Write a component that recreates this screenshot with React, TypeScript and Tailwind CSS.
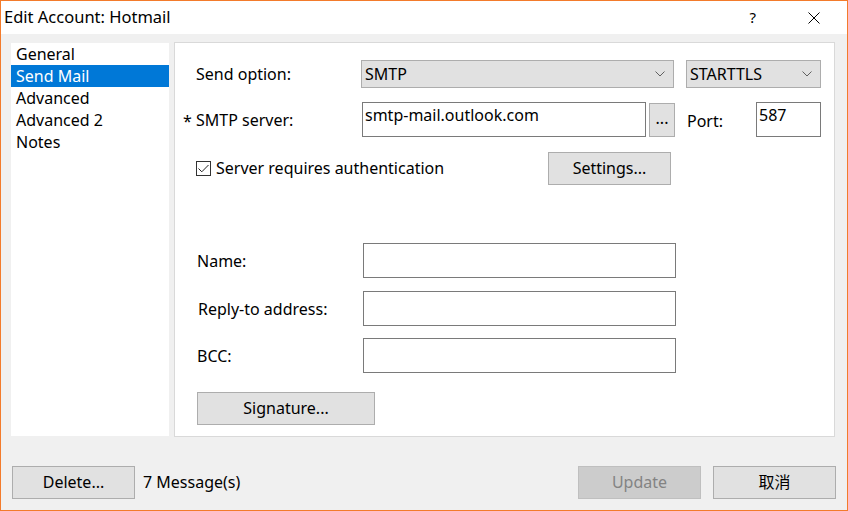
import React from 'react';

const font = { fontFamily: '"Noto Sans", "Noto Sans CJK SC", sans-serif' };

const Chevron = () => (
  <svg width="10" height="6" viewBox="0 0 10 6" className="text-[#606060]">
    <path d="M0.5 0.5 L5 5 L9.5 0.5" fill="none" stroke="currentColor" strokeWidth="1" />
  </svg>
);

const Select = ({ value, className }: { value: string; className: string }) => (
  <div
    className={`flex h-[28px] items-center justify-between border border-[#adadad] bg-[#e1e1e1] pl-[3px] pr-[8px] ${className}`}
  >
    <span className="-mt-[1px]">{value}</span>
    <Chevron />
  </div>
);

const Button = ({ label, className, disabled }: { label: string; className: string; disabled?: boolean }) => (
  <button
    className={`flex h-[33px] items-center justify-center border pb-[1px] ${
      disabled ? 'border-[#bfbfbf] bg-[#cccccc] text-[#838383]' : 'border-[#adadad] bg-[#e1e1e1] text-black'
    } ${className}`}
  >
    {label}
  </button>
);

const Field = ({ value, className }: { value?: string; className: string }) => (
  <div className={`h-[35px] border border-[#7a7a7a] bg-white pl-[2px] pt-[1px] leading-[22px] ${className}`}>
    {value}
  </div>
);

const navItems = ['General', 'Send Mail', 'Advanced', 'Advanced 2', 'Notes'];

export default function App() {
  return (
    <div
      className="flex h-[511px] w-[848px] flex-col border border-[#f37b2b] text-[16px] text-black"
      style={font}
    >
      {/* title bar */}
      <div className="flex h-[33px] shrink-0 items-center bg-white pl-[3px]">
        <span className="-mt-[1px] text-[16.5px]">Edit Account: Hotmail</span>
        <span className="ml-auto mr-[52px] text-[15px]">?</span>
        <svg width="12" height="12" viewBox="0 0 12 12" className="mr-[27px]">
          <path d="M0.5 0.5 L11.5 11.5 M11.5 0.5 L0.5 11.5" stroke="#000" strokeWidth="1" />
        </svg>
      </div>

      <div className="flex flex-1 flex-col bg-[#f0f0f0]">
        <div className="flex items-start pl-[10px] pt-[8px]">
          {/* side list */}
          <div className="mt-[1px] h-[393px] w-[158px] bg-white leading-[22px]">
            {navItems.map((item) => (
              <div
                key={item}
                className={`h-[22px] pl-[5px] ${item === 'Send Mail' ? 'bg-[#0078d7] text-white' : ''}`}
              >
                {item}
              </div>
            ))}
          </div>

          {/* main panel */}
          <div className="ml-[5px] flex h-[395px] w-[661px] flex-col border border-[#d9d9d9] bg-white pl-[8px]">
            <div className="mt-[17px] flex items-center">
              <span className="w-[13px]" />
              <span className="-mt-[1px] w-[165px]">Send option:</span>
              <Select value="SMTP" className="w-[313px]" />
              <Select value="STARTTLS" className="ml-[12px] w-[135px]" />
            </div>

            <div className="mt-[14px] flex items-center">
              <span className="w-[13px] pt-[2px]">*</span>
              <span className="w-[166px] pt-[1px]">SMTP server:</span>
              <Field value="smtp-mail.outlook.com" className="w-[284px]" />
              <Button label="..." className="ml-[3px] h-[34px] w-[26px] pb-[3px]" />
              <span className="ml-[12px] w-[69px] pt-[2px]">Port:</span>
              <Field value="587" className="w-[65px]" />
            </div>

            <div className="mt-[15px] flex items-center">
              <span className="w-[13px]" />
              <div className="flex h-[15px] w-[15px] items-center justify-center border border-[#333333] bg-white">
                <svg width="11" height="9" viewBox="0 0 11 9">
                  <path d="M0.5 4.5 L3.8 7.8 L10.5 1" fill="none" stroke="#222" strokeWidth="1" />
                </svg>
              </div>
              <span className="-mt-[1px] ml-[5px] w-[332px]">Server requires authentication</span>
              <Button label="Settings..." className="w-[123px]" />
            </div>

            <div className="mt-[58px] flex items-center">
              <span className="w-[14px]" />
              <span className="w-[166px]">Name:</span>
              <Field className="w-[313px]" />
            </div>

            <div className="mt-[13px] flex items-center">
              <span className="w-[15px]" />
              <span className="w-[165px]">Reply-to address:</span>
              <Field className="w-[313px]" />
            </div>

            <div className="mt-[12px] flex items-center">
              <span className="w-[14px]" />
              <span className="w-[166px]">BCC:</span>
              <Field className="w-[313px]" />
            </div>

            <div className="mt-[19px] flex items-center">
              <span className="w-[14px]" />
              <Button label="Signature..." className="w-[178px]" />
            </div>
          </div>
        </div>

        {/* bottom bar */}
        <div className="mt-[29px] flex items-center pl-[11px] pr-[11px]">
          <Button label="Delete..." className="w-[123px]" />
          <span className="-mt-[1px] ml-[8px]">7 Message(s)</span>
          <Button label="Update" disabled className="ml-auto w-[123px]" />
          <Button label="取消" className="ml-[12px] w-[123px]" />
        </div>
      </div>
    </div>
  );
}
